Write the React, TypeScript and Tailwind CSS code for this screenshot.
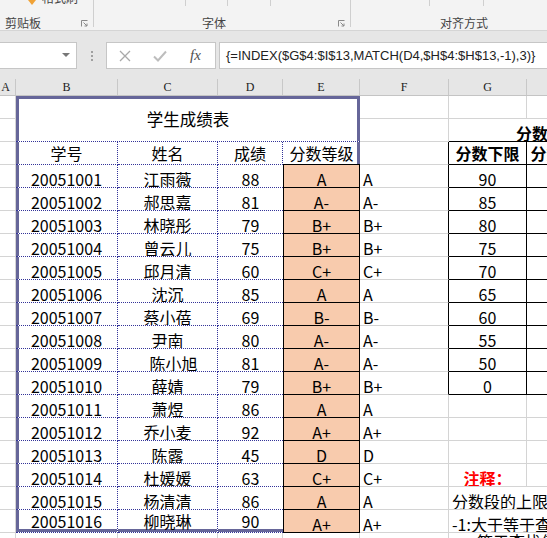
import React from "react";

const CJK = "font-['Noto_Sans_CJK_SC',sans-serif]";

const data: [string, string, string, string][] = [
  ["20051001", "江雨薇", "88", "A"],
  ["20051002", "郝思嘉", "81", "A-"],
  ["20051003", "林晓彤", "79", "B+"],
  ["20051004", "曾云儿", "75", "B+"],
  ["20051005", "邱月清", "60", "C+"],
  ["20051006", "沈沉", "85", "A"],
  ["20051007", "蔡小蓓", "69", "B-"],
  ["20051008", "尹南", "80", "A-"],
  ["20051009", "陈小旭", "81", "A-"],
  ["20051010", "薛婧", "79", "B+"],
  ["20051011", "萧煜", "86", "A"],
  ["20051012", "乔小麦", "92", "A+"],
  ["20051013", "陈露", "45", "D"],
  ["20051014", "杜媛媛", "63", "C+"],
  ["20051015", "杨清清", "86", "A"],
  ["20051016", "柳晓琳", "90", "A+"],
];

const gvals = ["90", "85", "80", "75", "70", "65", "60", "55", "50", "0"];

const GRIDC = "border-r border-b border-r-[#d4d4d4] border-b-[#d4d4d4]";
const DOTRB = "border-r border-b border-dotted border-r-[#333399] border-b-[#333399]";
const BLK = "border-r border-b border-r-black border-b-black";

function C({ c, children }: { c: string; children?: React.ReactNode }) {
  return (
    <div className={"box-border flex min-w-0 overflow-hidden whitespace-nowrap leading-[16px] " + c}>
      {children}
    </div>
  );
}

function Launcher() {
  return (
    <svg width="7" height="7" viewBox="0 0 7 7" className="block">
      <path d="M0.5 6.5V0.5H6.5" fill="none" stroke="#8a8a8a" strokeWidth="1" />
      <path d="M2.5 2.5L6 6M6 3.5V6H3.5" fill="none" stroke="#8a8a8a" strokeWidth="1" />
    </svg>
  );
}

function TopTick() {
  return <div className="w-px h-[6px] bg-[#cfcfcf] shrink-0" />;
}

function Ribbon() {
  return (
    <div className={"h-[31px] bg-[#f3f3f3] border-b border-[#d5d5d5] flex box-border text-[#444] " + CJK}>
      <div className="w-[93px] flex flex-col shrink-0">
        <div className="h-[8px] overflow-hidden flex items-start">
          <div className="w-[28px]" />
          <svg width="8" height="6" viewBox="0 0 8 6" className="block">
            <path d="M0 0H8L4 5Z" fill="#f0a236" />
          </svg>
          <div className="w-[6px]" />
          <span className="block text-[12px] leading-[14px] -mt-[9px]">格式刷</span>
        </div>
        <div className="flex items-center mt-[7px] h-[15px]">
          <span className="pl-[5px] text-[12px] leading-[15px]">剪贴板</span>
          <div className="ml-auto mr-[5px] mt-[2px]">
            <Launcher />
          </div>
        </div>
      </div>
      <div className="w-px h-[27px] bg-[#cfcfcf] shrink-0" />
      <div className="w-[256px] flex flex-col shrink-0">
        <div className="h-[8px] flex items-start">
          <div className="w-[91px]" />
          <TopTick />
          <div className="w-[41px]" />
          <TopTick />
          <div className="w-[42px]" />
          <TopTick />
        </div>
        <div className="flex items-center mt-[7px] h-[15px]">
          <span className="pl-[108px] text-[12px] leading-[15px]">字体</span>
          <div className="ml-auto mr-[5px] mt-[2px]">
            <Launcher />
          </div>
        </div>
      </div>
      <div className="w-px h-[27px] bg-[#cfcfcf] shrink-0" />
      <div className="flex-1 flex flex-col">
        <div className="h-[8px] flex items-start">
          <div className="w-[78px]" />
          <TopTick />
          <div className="w-[53px]" />
          <TopTick />
        </div>
        <div className="flex items-center mt-[7px] h-[15px]">
          <span className="pl-[89px] text-[12px] leading-[15px]">对齐方式</span>
        </div>
      </div>
    </div>
  );
}

function FormulaBand() {
  return (
    <div className="h-[48px] bg-[#e6e6e6] flex items-start pt-[11px] box-border">
      <div className="-ml-px w-[78px] h-[27px] shrink-0 bg-white border border-[#c6c6c6] box-border flex items-center justify-end pr-[6px]">
        <svg width="8" height="4" viewBox="0 0 8 4" className="block -mt-px">
          <path d="M0 0H8L4 4Z" fill="#777" />
        </svg>
      </div>
      <div className="w-[29px] shrink-0 flex flex-col items-center pt-[9px] gap-[2px]">
        <div className="w-[2px] h-[2px] bg-[#a0a0a0]" />
        <div className="w-[2px] h-[2px] bg-[#a0a0a0]" />
        <div className="w-[2px] h-[2px] bg-[#a0a0a0]" />
      </div>
      <div className="w-[110px] h-[27px] shrink-0 bg-white border border-[#c6c6c6] box-border flex items-center">
        <svg width="12" height="12" viewBox="0 0 12 12" className="block ml-[12px]">
          <path d="M1 1L11 11M11 1L1 11" stroke="#a9a9a9" strokeWidth="1.3" fill="none" />
        </svg>
        <svg width="14" height="12" viewBox="0 0 14 12" className="block ml-[22px]">
          <path d="M1 6.5L5 10.5L13 1.5" stroke="#bdbdbd" strokeWidth="2" fill="none" />
        </svg>
        <span className="ml-[23px] italic font-['Liberation_Serif',serif] text-[15px] leading-[15px] text-[#505050]">
          fx
        </span>
      </div>
      <div className="ml-[3px] w-[340px] h-[27px] shrink-0 bg-white border border-[#c6c6c6] box-border flex items-center pl-[6px] font-['Liberation_Sans',sans-serif] text-[13px] text-[#222] whitespace-nowrap">
        {"{=INDEX($G$4:$I$13,MATCH(D4,$H$4:$H$13,-1),3)}"}
      </div>
    </div>
  );
}

const COLS = "grid-cols-[16px_102px_100px_65px_77px_89px_78px_72px_100px]";

function ColHeaders() {
  const letters = ["A", "B", "C", "D", "E", "F", "G", "H", "I"];
  return (
    <div className={"grid h-[17px] bg-[#e6e6e6] border-b border-[#c4c4c4] box-border " + COLS}>
      {letters.map((l, i) => (
        <div
          key={l}
          className={
            "border-r border-[#c8c8c8] flex items-center justify-center text-[12px] leading-[12px] text-[#222] font-['Liberation_Serif',serif] " +
            (i === 0 ? "pr-[4px]" : "")
          }
        >
          {l}
        </div>
      ))}
    </div>
  );
}

function Sheet() {
  const rows: React.ReactNode[] = [];
  rows.push(
    <React.Fragment key="r1">
      <C c={GRIDC} />
      <C c="col-span-4 row-span-2 items-center justify-center text-[16.5px] border-b border-dotted border-b-[#333399] shadow-[inset_3px_3px_0_#666699,inset_-3px_0_0_#666699]">
        学生成绩表
      </C>
      <C c={GRIDC} />
      <C c={GRIDC} />
      <C c={GRIDC} />
      <C c={GRIDC} />
    </React.Fragment>
  );
  rows.push(
    <React.Fragment key="r2">
      <C c={GRIDC} />
      <C c={GRIDC} />
      <C c="col-span-3 border-b border-b-black items-end pl-[67px] font-bold text-[16px]">分数等级对照表</C>
    </React.Fragment>
  );
  rows.push(
    <React.Fragment key="r3">
      <C c={GRIDC} />
      <C c={DOTRB + " shadow-[inset_3px_0_0_#666699] items-center justify-center text-[16px]"}>学号</C>
      <C c={DOTRB + " items-center justify-center text-[16px]"}>姓名</C>
      <C c={DOTRB + " items-center justify-center text-[16px]"}>成绩</C>
      <C c="border-b border-b-black shadow-[inset_-3px_0_0_#666699] items-center justify-center text-[16px]">
        分数等级
      </C>
      <C c="border-r border-b border-r-black border-b-[#d4d4d4]" />
      <C c={BLK + " items-center justify-center font-bold text-[16px]"}>分数下限</C>
      <C c={BLK + " items-center justify-center font-bold text-[16px]"}>分数上限</C>
      <C c={BLK + " items-center justify-center font-bold text-[16px]"}>等级</C>
    </React.Fragment>
  );
  data.forEach((d, i) => {
    const last = i === data.length - 1;
    let g: React.ReactNode;
    if (i <= 9) {
      g = (
        <>
          <C c={BLK + " items-end justify-center text-[16px]"}>{gvals[i]}</C>
          <C c={BLK} />
          <C c={BLK} />
        </>
      );
    } else if (i <= 12) {
      g = (
        <>
          <C c={GRIDC} />
          <C c={GRIDC} />
          <C c={GRIDC} />
        </>
      );
    } else if (i === 13) {
      g = (
        <>
          <C c={GRIDC + " items-end justify-center font-bold text-[16px] text-[#ff0000]"}>注释：</C>
          <C c={GRIDC} />
          <C c={GRIDC} />
        </>
      );
    } else if (i === 14) {
      g = (
        <C c={GRIDC + " col-span-3 items-end pl-[3px] text-[16px]"}>分数段的上限值与下限值须按降序排列</C>
      );
    } else {
      g = <C c={GRIDC + " col-span-3 items-end pl-[3px] text-[16px]"}>-1:大于等于查找值中的最小值</C>;
    }
    const nameShift = d[1] === "陈小旭" ? " pl-[12px]" : "";
    rows.push(
      <React.Fragment key={"d" + i}>
        <C c={GRIDC} />
        <C
          c={
            DOTRB +
            " items-end justify-center text-[16px] " +
            (last ? "shadow-[inset_3px_-3px_0_#666699] pb-[3px]" : "shadow-[inset_3px_0_0_#666699]")
          }
        >
          {d[0]}
        </C>
        <C
          c={
            DOTRB +
            " items-end justify-center text-[16px]" +
            nameShift +
            (last ? " shadow-[inset_0_-3px_0_#666699] pb-[3px]" : "")
          }
        >
          {d[1]}
        </C>
        <C
          c={
            "border-b border-dotted border-b-[#333399] items-end justify-center text-[16px]" +
            (last ? " shadow-[inset_0_-3px_0_#666699] pb-[3px]" : "")
          }
        >
          {d[2]}
        </C>
        <C c="bg-[#f8cbad] border-l border-r border-b border-black items-end justify-center text-[16px]">{d[3]}</C>
        <C
          c={
            "border-r border-b border-b-[#d4d4d4] items-end pl-[3px] text-[16px] " +
            (i <= 9 ? "border-r-black" : "border-r-[#d4d4d4]")
          }
        >
          {d[3]}
        </C>
        {g}
      </React.Fragment>
    );
  });
  rows.push(
    <React.Fragment key="r20">
      <C c={GRIDC} />
      <C c={GRIDC} />
      <C c={GRIDC} />
      <C c={GRIDC} />
      <C c={GRIDC} />
      <C c={GRIDC} />
      <C c={GRIDC + " col-span-3 items-start pl-[28px] text-[16px]"}>等于查找值的最小值</C>
    </React.Fragment>
  );

  return <div className={"grid auto-rows-[23px] text-black " + COLS + " " + CJK}>{rows}</div>;
}

export default function App() {
  return (
    <div className="w-[547px] h-[538px] overflow-hidden bg-white">
      <Ribbon />
      <FormulaBand />
      <ColHeaders />
      <Sheet />
    </div>
  );
}
